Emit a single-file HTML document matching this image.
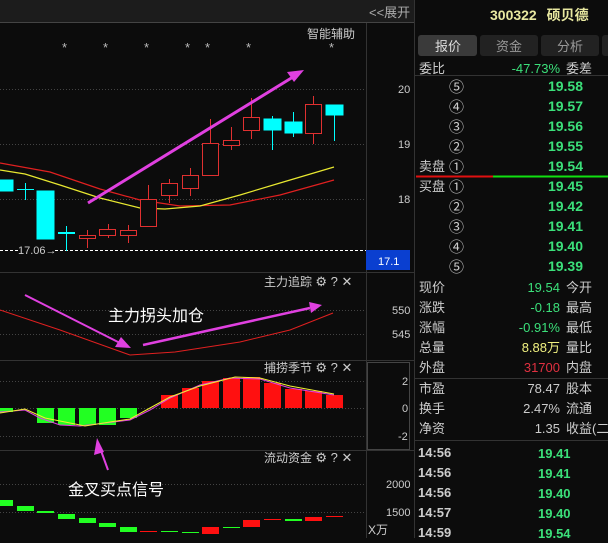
<!DOCTYPE html>
<html><head><meta charset="utf-8"><style>
body{margin:0;background:#0c0c0c;width:608px;height:538px;overflow:hidden;font-family:"Liberation Sans","Noto Sans CJK SC",sans-serif;}
svg text{font-family:"Liberation Sans","Noto Sans CJK SC",sans-serif;}
</style></head><body>
<svg width="608" height="538" xmlns="http://www.w3.org/2000/svg">
<rect width="608" height="538" fill="#0c0c0c"/>
<rect x="0" y="0" width="414" height="22" fill="#1c1c1c"/>
<line x1="0" y1="22.5" x2="414" y2="22.5" stroke="#444"/>
<text x="369" y="17" fill="#aaa" font-size="13">&lt;&lt;展开</text>
<line x1="366.5" y1="23" x2="366.5" y2="538" stroke="#333"/>
<line x1="414.5" y1="0" x2="414.5" y2="538" stroke="#333"/>
<line x1="0" y1="272.5" x2="414" y2="272.5" stroke="#333"/>
<line x1="0" y1="360.5" x2="414" y2="360.5" stroke="#333"/>
<line x1="0" y1="450.5" x2="414" y2="450.5" stroke="#333"/>
<g stroke="#444" stroke-dasharray="1,2">
<line x1="0" y1="89.5" x2="366" y2="89.5"/><line x1="0" y1="144.5" x2="366" y2="144.5"/><line x1="0" y1="199.5" x2="366" y2="199.5"/>
<line x1="0" y1="310.5" x2="366" y2="310.5"/><line x1="0" y1="334.5" x2="366" y2="334.5"/>
<line x1="0" y1="381.5" x2="366" y2="381.5"/><line x1="0" y1="408.5" x2="366" y2="408.5"/><line x1="0" y1="436.5" x2="366" y2="436.5"/>
<line x1="0" y1="484.5" x2="366" y2="484.5"/><line x1="0" y1="512.5" x2="366" y2="512.5"/>
</g>
<g fill="#ccc" font-size="11">
<text x="398" y="93">20</text><text x="398" y="148">19</text><text x="398" y="203">18</text>
<text x="392" y="314">550</text><text x="392" y="338">545</text>
<text x="402" y="385">2</text><text x="402" y="412">0</text><text x="398" y="440">-2</text>
<text x="386" y="488">2000</text><text x="386" y="516">1500</text><text x="368" y="534" font-size="12">X万</text>
</g>
<rect x="367.5" y="362.5" width="42" height="87" fill="none" stroke="#444"/>
<text x="307" y="38" fill="#ccc" font-size="12">智能辅助</text>
<g fill="#bbb" font-size="13"><text x="62" y="52">*</text><text x="103" y="52">*</text><text x="144" y="52">*</text><text x="185" y="52">*</text><text x="205" y="52">*</text><text x="246" y="52">*</text><text x="329" y="52">*</text></g>
<line x1="0" y1="250.5" x2="366" y2="250.5" stroke="#fff" stroke-dasharray="3,2"/>
<rect x="18" y="244" width="36" height="12" fill="#0c0c0c"/>
<text x="18" y="254" fill="#ccc" font-size="11">17.06→</text>
<rect x="366" y="250" width="44" height="20" fill="#0a3fd0"/>
<text x="378" y="265" fill="#fff" font-size="11">17.1</text>
<polyline fill="none" stroke="#e02020" stroke-width="1.2" points="0,163 50,172 100,189 140,200 180,206 230,205 280,195 334,180"/>
<polyline fill="none" stroke="#e8e830" stroke-width="1.2" points="0,170 25,174 60,185 100,198 140,208 165,209 200,206 240,195 280,183 334,167"/>
<g fill="#00ffff" stroke="#00ffff">
<rect x="0" y="180" width="13" height="11"/>
<line x1="25.5" y1="183" x2="25.5" y2="200"/><line x1="17" y1="189.5" x2="34" y2="189.5"/>
<rect x="37" y="191" width="17" height="48"/>
<line x1="66.5" y1="226" x2="66.5" y2="251"/><line x1="58" y1="233" x2="75" y2="233" stroke-width="2"/>
<line x1="272.5" y1="116" x2="272.5" y2="150"/><rect x="264" y="119" width="17" height="11"/>
<line x1="293.5" y1="112" x2="293.5" y2="137"/><rect x="285" y="122" width="17" height="11"/>
<line x1="334.5" y1="105" x2="334.5" y2="141"/><rect x="326" y="105" width="17" height="10"/>
</g>
<g fill="#0c0c0c" stroke="#e03030">
<line x1="87.5" y1="230" x2="87.5" y2="248"/><rect x="79.5" y="235.5" width="16" height="3"/>
<line x1="108.5" y1="224" x2="108.5" y2="238"/><rect x="99.5" y="229.5" width="16" height="6"/>
<line x1="128.5" y1="225" x2="128.5" y2="243"/><rect x="120.5" y="230.5" width="16" height="5"/>
<line x1="148.5" y1="185" x2="148.5" y2="227"/><rect x="140.5" y="199.5" width="16" height="27"/>
<line x1="169.5" y1="179" x2="169.5" y2="203"/><rect x="161.5" y="183.5" width="16" height="12"/>
<line x1="190.5" y1="168" x2="190.5" y2="196"/><rect x="182.5" y="175.5" width="16" height="13"/>
<line x1="210.5" y1="119" x2="210.5" y2="175"/><rect x="202.5" y="143.5" width="16" height="32"/>
<line x1="231.5" y1="127" x2="231.5" y2="150"/><rect x="223.5" y="140.5" width="16" height="5"/>
<line x1="251.5" y1="98" x2="251.5" y2="139"/><rect x="243.5" y="117.5" width="16" height="13"/>
<line x1="313.5" y1="96" x2="313.5" y2="144"/><rect x="305.5" y="104.5" width="16" height="29"/>
</g>
<line x1="88" y1="203" x2="293" y2="77" stroke="#e040e0" stroke-width="3"/>
<polygon points="304,70 287,72 294,82" fill="#e040e0"/>
<text x="264" y="286" fill="#ccc" font-size="12">主力追踪 <tspan font-size="13">⚙ ? ✕</tspan></text>
<polyline fill="none" stroke="#e02020" points="0,310 60,330 130,355 175,352 240,342 290,330 333,313"/>
<line x1="25" y1="295" x2="120" y2="343" stroke="#e040e0" stroke-width="2"/>
<polygon points="131,348 115,347 121,337" fill="#e040e0"/>
<line x1="143" y1="345" x2="310" y2="308" stroke="#e040e0" stroke-width="2.5"/>
<polygon points="322,305 309,302 311,313" fill="#e040e0"/>
<text x="108" y="321" fill="#fff" font-size="16">主力拐头加仓</text>
<text x="264" y="372" fill="#ccc" font-size="12">捕捞季节 <tspan font-size="13">⚙ ? ✕</tspan></text>
<g fill="#22ff22">
<rect x="0" y="408" width="13" height="4"/><rect x="37" y="408" width="17" height="15"/><rect x="58" y="408" width="17" height="17"/><rect x="79" y="408" width="17" height="17"/><rect x="99" y="408" width="17" height="17"/><rect x="120" y="408" width="17" height="10"/>
</g>
<g fill="#ff1010">
<rect x="161" y="395" width="17" height="13"/><rect x="182" y="388" width="17" height="20"/><rect x="202" y="381" width="17" height="27"/><rect x="223" y="378" width="17" height="30"/><rect x="243" y="377" width="17" height="31"/><rect x="264" y="383" width="17" height="25"/><rect x="285" y="389" width="17" height="19"/><rect x="305" y="391" width="17" height="17"/><rect x="326" y="395" width="17" height="13"/>
</g>
<polyline fill="none" stroke="#e040e0" points="0,412 25,410 40,418 60,425 80,426 105,423 130,420 150,410 170,398 200,385 230,378 260,379 290,388 334,395"/>
<polyline fill="none" stroke="#f0f030" points="0,413 25,409 45,418 65,422 85,426 110,422 130,419 150,408 170,397 200,386 235,377 260,378 290,386 334,394"/>
<text x="264" y="462" fill="#ccc" font-size="12">流动资金 <tspan font-size="13">⚙ ? ✕</tspan></text>
<text x="68" y="495" fill="#fff" font-size="16">金叉买点信号</text>
<line x1="108" y1="470" x2="100" y2="448" stroke="#e040e0" stroke-width="2"/>
<polygon points="97,438 94,455 104,452" fill="#e040e0"/>
<g fill="#22ff22">
<rect x="0" y="500" width="13" height="6"/><rect x="17" y="506" width="17" height="5"/><rect x="37" y="511" width="17" height="2"/><rect x="58" y="514" width="17" height="5"/><rect x="79" y="518" width="17" height="5"/><rect x="99" y="523" width="17" height="4"/><rect x="120" y="527" width="17" height="5"/><rect x="161" y="531" width="17" height="1"/><rect x="182" y="532" width="17" height="1"/><rect x="223" y="527" width="17" height="1"/><rect x="285" y="519" width="17" height="2"/>
</g>
<g fill="#ff1010">
<rect x="140" y="531" width="17" height="1"/><rect x="202" y="527" width="17" height="7"/><rect x="243" y="520" width="17" height="7"/><rect x="264" y="519" width="17" height="1"/><rect x="305" y="517" width="17" height="4"/><rect x="326" y="516" width="17" height="1"/>
</g>
<text x="490" y="20" fill="#e8e8a0" font-size="14" font-weight="bold">300322 <tspan dx="6">硕贝德</tspan></text>
<rect x="418" y="35" width="59" height="21" rx="3" fill="#3a3a3a"/>
<rect x="480" y="35" width="58" height="21" rx="3" fill="#222"/>
<rect x="541" y="35" width="58" height="21" rx="3" fill="#222"/>
<rect x="602" y="35" width="10" height="21" rx="3" fill="#222"/>
<g font-size="13" fill="#ddd"><text x="435" y="51">报价</text><text x="496" y="51" fill="#999">资金</text><text x="557" y="51" fill="#999">分析</text></g>
<g font-size="13" fill="#ccc">
<text x="419" y="73">委比</text><text x="566" y="73">委差</text>
<text x="419" y="171">卖盘</text><text x="419" y="191">买盘</text>
</g>
<g font-size="15" fill="#ccc">
<text x="449" y="92">⑤</text><text x="449" y="112">④</text><text x="449" y="132">③</text><text x="449" y="152">②</text><text x="449" y="172">①</text>
<text x="449" y="192">①</text><text x="449" y="212">②</text><text x="449" y="232">③</text><text x="449" y="252">④</text><text x="449" y="272">⑤</text>
</g>
<line x1="415" y1="75.5" x2="608" y2="75.5" stroke="#333"/>
<line x1="416" y1="176.5" x2="493" y2="176.5" stroke="#e01010" stroke-width="2"/>
<line x1="493" y1="176.5" x2="608" y2="176.5" stroke="#10e010" stroke-width="2"/>
<g font-size="14" font-weight="bold" fill="#3be07a" text-anchor="end">
<text x="560" y="73" font-weight="normal" font-size="13">-47.73%</text>
<text x="583" y="91">19.58</text><text x="583" y="111">19.57</text><text x="583" y="131">19.56</text><text x="583" y="151">19.55</text><text x="583" y="171">19.54</text>
<text x="583" y="191">19.45</text><text x="583" y="211">19.42</text><text x="583" y="231">19.41</text><text x="583" y="251">19.40</text><text x="583" y="271">19.39</text>
</g>
<g font-size="13" fill="#ccc">
<text x="419" y="292">现价</text><text x="566" y="292">今开</text>
<text x="419" y="312">涨跌</text><text x="566" y="312">最高</text>
<text x="419" y="332">涨幅</text><text x="566" y="332">最低</text>
<text x="419" y="352">总量</text><text x="566" y="352">量比</text>
<text x="419" y="372">外盘</text><text x="566" y="372">内盘</text>
<text x="419" y="393">市盈</text><text x="566" y="393">股本</text>
<text x="419" y="413">换手</text><text x="566" y="413">流通</text>
<text x="419" y="433">净资</text><text x="566" y="433">收益(二</text>
</g>
<g font-size="13" text-anchor="end">
<text x="560" y="292" fill="#3be07a">19.54</text>
<text x="560" y="312" fill="#3be07a">-0.18</text>
<text x="560" y="332" fill="#3be07a">-0.91%</text>
<text x="560" y="352" fill="#f0f080">8.88万</text>
<text x="560" y="372" fill="#e03040">31700</text>
<text x="560" y="393" fill="#ccc">78.47</text>
<text x="560" y="413" fill="#ccc">2.47%</text>
<text x="560" y="433" fill="#ccc">1.35</text>
</g>
<line x1="415" y1="378.5" x2="608" y2="378.5" stroke="#333"/>
<line x1="415" y1="440.5" x2="608" y2="440.5" stroke="#333"/>
<g font-size="13" font-weight="bold" fill="#ccc">
<text x="418" y="457">14:56</text><text x="418" y="477">14:56</text><text x="418" y="497">14:56</text><text x="418" y="517">14:57</text><text x="418" y="537">14:59</text>
</g>
<g font-size="13" font-weight="bold" fill="#3be07a">
<text x="538" y="458">19.41</text><text x="538" y="478">19.41</text><text x="538" y="498">19.40</text><text x="538" y="518">19.40</text><text x="538" y="538">19.54</text>
</g>
</svg>
</body></html>
